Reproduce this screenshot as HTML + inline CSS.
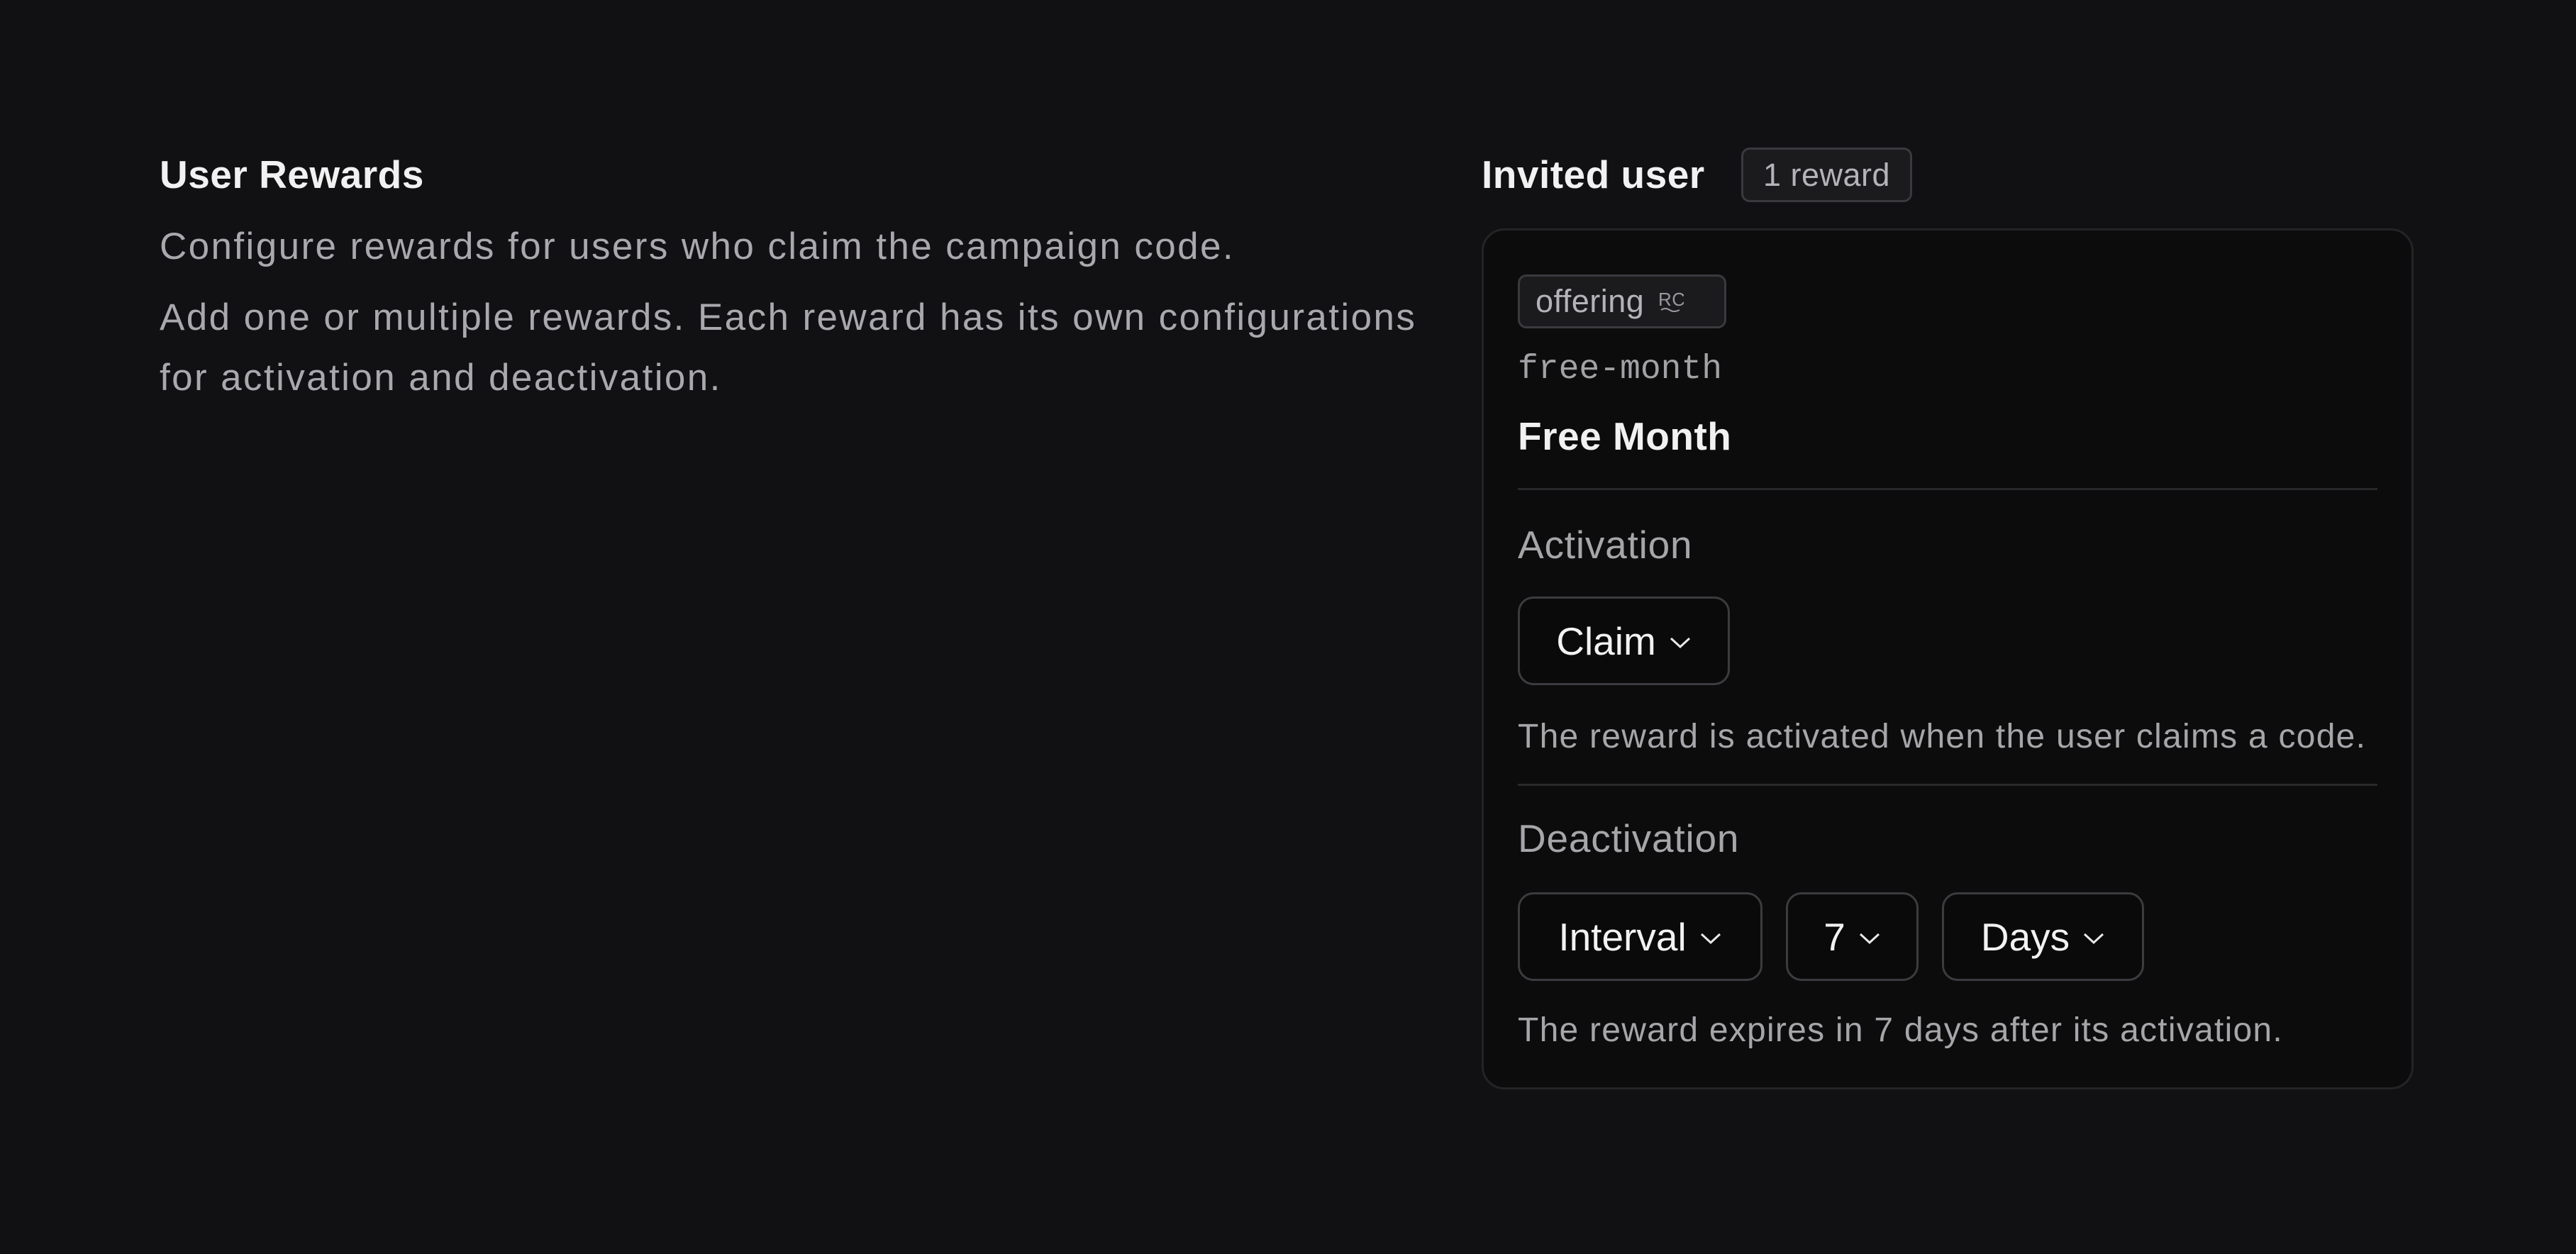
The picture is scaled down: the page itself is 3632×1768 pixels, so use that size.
<!DOCTYPE html>
<html><head><meta charset="utf-8"><style>
*{margin:0;padding:0;box-sizing:border-box}
html,body{width:3632px;height:1768px;background:#111113;overflow:hidden}
body{font-family:"Liberation Sans",sans-serif;position:relative}
.a{position:absolute;white-space:nowrap}
.h{color:#f1f1f2;font-weight:bold;font-size:55px;line-height:60px;letter-spacing:0.5px}
.p{color:#a9a9ad;font-size:53px;line-height:85px;letter-spacing:2.4px}
.badge{position:absolute;border:3px solid #3a3a3e;background:#1b1b1e;border-radius:12px;color:#b4b4b8;font-size:45px;display:flex;align-items:center;justify-content:center;letter-spacing:0.5px}
.card{position:absolute;left:2089px;top:322px;width:1314px;height:1214px;background:#0c0c0d;border:3px solid #242427;border-radius:32px}
.div{position:absolute;left:2140px;width:1212px;height:3px;background:#29292c}
.lbl{color:#a6a6aa;font-size:55px;line-height:60px;letter-spacing:0.8px}
.help{color:#a6a6aa;font-size:48px;line-height:60px;letter-spacing:1.25px}
.btn{position:absolute;border:3px solid #3c3c40;background:#0a0a0b;border-radius:22px;color:#f2f2f3;font-size:55px;display:flex;align-items:center;justify-content:center;gap:18px}
.btn svg{width:32px;height:20px;margin-top:4px}
</style></head><body>
<div class="a h" style="left:225px;top:216px">User Rewards</div>
<div class="a p" style="left:225px;top:305px">Configure rewards for users who claim the campaign code.</div>
<div class="a p" style="left:225px;top:405px">Add one or multiple rewards. Each reward has its own configurations<br>for activation and deactivation.</div>

<div class="a h" style="left:2089px;top:216px">Invited user</div>
<div class="badge" style="left:2455px;top:208px;width:241px;height:77px">1 reward</div>

<div class="card"></div>
<div class="badge" style="left:2140px;top:387px;width:294px;height:76px;gap:20px;justify-content:flex-start;padding-left:22px">offering
<svg width="36" height="40" viewBox="0 0 36 40"><text x="0" y="26" font-family="Liberation Sans" font-size="26" fill="#9a9a9e">RC</text><path d="M4 32 q6 -4 12 0 t14 0" stroke="#9a9a9e" stroke-width="2" fill="none"/></svg></div>
<div class="a" style="left:2140px;top:491px;color:#a2a2a6;font-family:'Liberation Mono',monospace;font-size:48px;line-height:60px">free-month</div>
<div class="a h" style="left:2140px;top:585px">Free Month</div>
<div class="div" style="top:688px"></div>
<div class="a lbl" style="left:2140px;top:738px">Activation</div>
<div class="btn" style="left:2140px;top:841px;width:299px;height:125px">Claim<svg viewBox="0 0 32 20"><path d="M3 4 L16 16 L29 4" stroke="#e8e8e8" stroke-width="3" fill="none"/></svg></div>
<div class="a help" style="left:2140px;top:1009px">The reward is activated when the user claims a code.</div>
<div class="div" style="top:1105px"></div>
<div class="a lbl" style="left:2140px;top:1152px">Deactivation</div>
<div class="btn" style="left:2140px;top:1258px;width:345px;height:125px">Interval<svg viewBox="0 0 32 20"><path d="M3 4 L16 16 L29 4" stroke="#e8e8e8" stroke-width="3" fill="none"/></svg></div>
<div class="btn" style="left:2518px;top:1258px;width:187px;height:125px">7<svg viewBox="0 0 32 20"><path d="M3 4 L16 16 L29 4" stroke="#e8e8e8" stroke-width="3" fill="none"/></svg></div>
<div class="btn" style="left:2738px;top:1258px;width:285px;height:125px">Days<svg viewBox="0 0 32 20"><path d="M3 4 L16 16 L29 4" stroke="#e8e8e8" stroke-width="3" fill="none"/></svg></div>
<div class="a help" style="left:2140px;top:1423px">The reward expires in 7 days after its activation.</div>
</body></html>
